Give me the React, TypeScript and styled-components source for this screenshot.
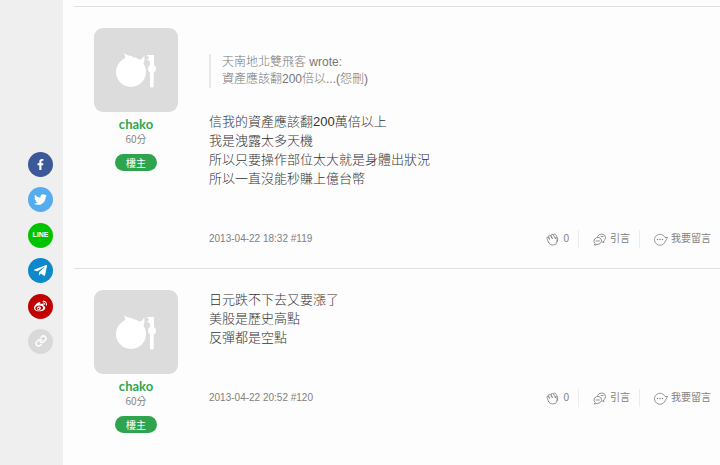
import React from "react";
import styled, { createGlobalStyle } from "styled-components";
import { FaFacebookF, FaTwitter, FaTelegramPlane, FaWeibo } from "react-icons/fa";
import { FiLink } from "react-icons/fi";

const GlobalStyle = createGlobalStyle`
  * { box-sizing: border-box; }
  body {
    margin: 0;
    background: #fdfdfd;
    font-family: "Liberation Sans", "Noto Sans CJK TC", sans-serif;
    color: #444;
  }
`;

const Page = styled.div`
  display: flex;
  min-height: 100vh;
`;

const Sidebar = styled.aside`
  flex: 0 0 63px;
  padding: 152px 10px 0 28px;
  background: #efefef;
`;

const ShareList = styled.nav`
  display: flex;
  flex-direction: column;
  justify-content: space-between;
  height: 202px;
`;

const ShareLink = styled.a<{ $color: string }>`
  display: flex;
  align-items: center;
  justify-content: center;
  width: 25px;
  height: 25px;
  border-radius: 50%;
  background: ${(p) => p.$color};
  color: #fff;
  text-decoration: none;
`;

const LineMark = styled.span`
  font: 700 7px/8px "Liberation Sans", sans-serif;
`;

const Main = styled.main`
  flex: 1;
  min-width: 0;
  padding: 6px 0 0 11px;
`;

const Post = styled.article`
  display: flex;
  gap: 31px;
  padding: 21px 9px 20px 20px;
  border-top: 1px solid #e0e2e2;
`;

const Author = styled.div`
  flex: 0 0 84px;
  display: flex;
  flex-direction: column;
  align-items: center;
`;

const Avatar = styled.div`
  width: 84px;
  height: 84px;
  border-radius: 9px;
  background: #dcdcdc;
  svg { display: block; }
`;

const AuthorName = styled.a`
  margin-top: 4px;
  font: 700 13px/16px Lato, sans-serif;
  color: #2fa650;
  text-decoration: none;
`;

const Score = styled.span`
  font: 400 10px/13px "Noto Sans CJK TC", sans-serif;
  color: #858585;
`;

const Badge = styled.span`
  margin-top: 9px;
  padding: 0 11px;
  border-radius: 9px;
  background: #2ea44f;
  color: #fff;
  font: 400 10px/17px "Noto Sans CJK TC", sans-serif;
`;

const Content = styled.div`
  flex: 1;
  min-width: 0;
`;

const Quote = styled.blockquote`
  margin: 26px 0 24px;
  padding-left: 11px;
  border-left: 2px solid #e8e8e8;
  font-size: 12px;
  line-height: 17px;
  font-weight: 300;
  color: #777;
`;

const Body = styled.p`
  margin: 0;
  font-size: 13px;
  line-height: 19px;
  font-weight: 300;
  color: #333;
`;

const Footer = styled.footer`
  display: flex;
  align-items: center;
  justify-content: space-between;
  margin-top: 42px;
  font-size: 10px;
  line-height: 18px;
  color: #808080;
`;

const Actions = styled.div`
  display: flex;
`;

const Action = styled.button`
  display: flex;
  align-items: center;
  gap: 4px;
  height: 18px;
  padding: 0 9px 0 14px;
  border: 0;
  border-left: 1px solid #ececec;
  background: none;
  color: #808080;
  font: inherit;
  white-space: nowrap;
  cursor: pointer;
  &:first-child { border-left: 0; }
  &:last-child { padding-right: 0; gap: 3px; }
`;

const AvatarArt = () => (
  <svg width="84" height="84" viewBox="0 0 252 252" fill="#fff" aria-hidden="true">
    <circle cx="111" cy="132" r="45" />
    <path d="M89 74 Q98 83 114 84 L118 94 L92 100 Q96 84 89 74Z" />
    <path d="M133 96 Q146 94 151 82 Q154 96 147 112Z" />
    <path d="M158 81 H180 V112 H168 V101 L159 94 L166 90Z" />
    <circle cx="174" cy="122" r="12" />
    <rect x="168" y="126" width="11" height="52" />
  </svg>
);

const ClapIcon = () => (
  <svg width="13" height="13" viewBox="0 0 26 26" fill="none" stroke="currentColor" strokeWidth="1.6" strokeLinecap="round" strokeLinejoin="round" aria-hidden="true">
    <path d="M5 19 L2 11 Q1 8 4 8 L7 13 L5 6 Q6 3 9 5 L13 12 L10 4 Q12 1 15 4 L19 12 L19 9 Q21 8 22 11 V18 Q21 24 14 24 Q8 25 5 19Z" />
    <path d="M15 3 Q18 0 20 4 L23 10 Q25 13 22 18" />
  </svg>
);

const QuoteIcon = () => (
  <svg width="13" height="13" viewBox="0 0 26 26" fill="none" stroke="currentColor" strokeWidth="1.7" strokeLinecap="round" strokeLinejoin="round" aria-hidden="true">
    <path d="M9 7 Q11 2 18 2 Q25 3 25 9 Q25 14 21 16 L22 19 L18 18" />
    <path d="M4 21 Q0 17 3 12 Q7 8 12 9 Q18 11 17 17 Q15 23 8 23 L3 24Z" />
    <path d="M6 16 H13 M16 7 H20" />
  </svg>
);

const CommentIcon = () => (
  <svg width="14" height="13" viewBox="0 0 28 26" fill="none" stroke="currentColor" strokeWidth="1.6" strokeLinejoin="round" aria-hidden="true">
    <path d="M22 9 A11 11 0 1 0 22 18 L27 9Z" />
    <g fill="currentColor" stroke="none">
      <circle cx="7" cy="13" r="1.5" />
      <circle cx="12" cy="13" r="1.5" />
      <circle cx="17" cy="13" r="1.5" />
    </g>
  </svg>
);

interface PostData {
  number: number;
  time: string;
  quote?: string[];
  lines: string[];
}

const posts: PostData[] = [
  {
    number: 119,
    time: "2013-04-22 18:32",
    quote: ["天南地北雙飛客 wrote:", "資產應該翻200倍以...(怨刪)"],
    lines: [
      "信我的資產應該翻200萬倍以上",
      "我是洩露太多天機",
      "所以只要操作部位太大就是身體出狀況",
      "所以一直沒能秒賺上億台幣",
    ],
  },
  {
    number: 120,
    time: "2013-04-22 20:52",
    lines: ["日元跌不下去又要漲了", "美股是歷史高點", "反彈都是空點"],
  },
];

const Lines = ({ items }: { items: string[] }) => (
  <>
    {items.map((line, i) => (
      <React.Fragment key={line}>
        {i > 0 && <br />}
        {line}
      </React.Fragment>
    ))}
  </>
);

const PostItem = ({ post }: { post: PostData }) => (
  <Post>
    <Author>
      <Avatar><AvatarArt /></Avatar>
      <AuthorName href="#chako">chako</AuthorName>
      <Score>60分</Score>
      <Badge>樓主</Badge>
    </Author>
    <Content>
      {post.quote && <Quote><Lines items={post.quote} /></Quote>}
      <Body><Lines items={post.lines} /></Body>
      <Footer>
        <span>{post.time} #{post.number}</span>
        <Actions>
          <Action type="button"><ClapIcon />0</Action>
          <Action type="button"><QuoteIcon />引言</Action>
          <Action type="button"><CommentIcon />我要留言</Action>
        </Actions>
      </Footer>
    </Content>
  </Post>
);

export default function App() {
  return (
    <>
      <GlobalStyle />
      <Page>
        <Sidebar>
          <ShareList aria-label="分享">
            <ShareLink $color="#3b5998" href="#facebook" aria-label="Facebook"><FaFacebookF size={11} /></ShareLink>
            <ShareLink $color="#55acee" href="#twitter" aria-label="Twitter"><FaTwitter size={13} /></ShareLink>
            <ShareLink $color="#00c300" href="#line"><LineMark>LINE</LineMark></ShareLink>
            <ShareLink $color="#0d88cb" href="#telegram" aria-label="Telegram"><FaTelegramPlane size={15} /></ShareLink>
            <ShareLink $color="#c00000" href="#weibo" aria-label="Weibo"><FaWeibo size={13} /></ShareLink>
            <ShareLink $color="#d9d9d9" href="#link" aria-label="Link"><FiLink size={12} strokeWidth={3} /></ShareLink>
          </ShareList>
        </Sidebar>
        <Main>
          {posts.map((post) => <PostItem key={post.number} post={post} />)}
        </Main>
      </Page>
    </>
  );
}
